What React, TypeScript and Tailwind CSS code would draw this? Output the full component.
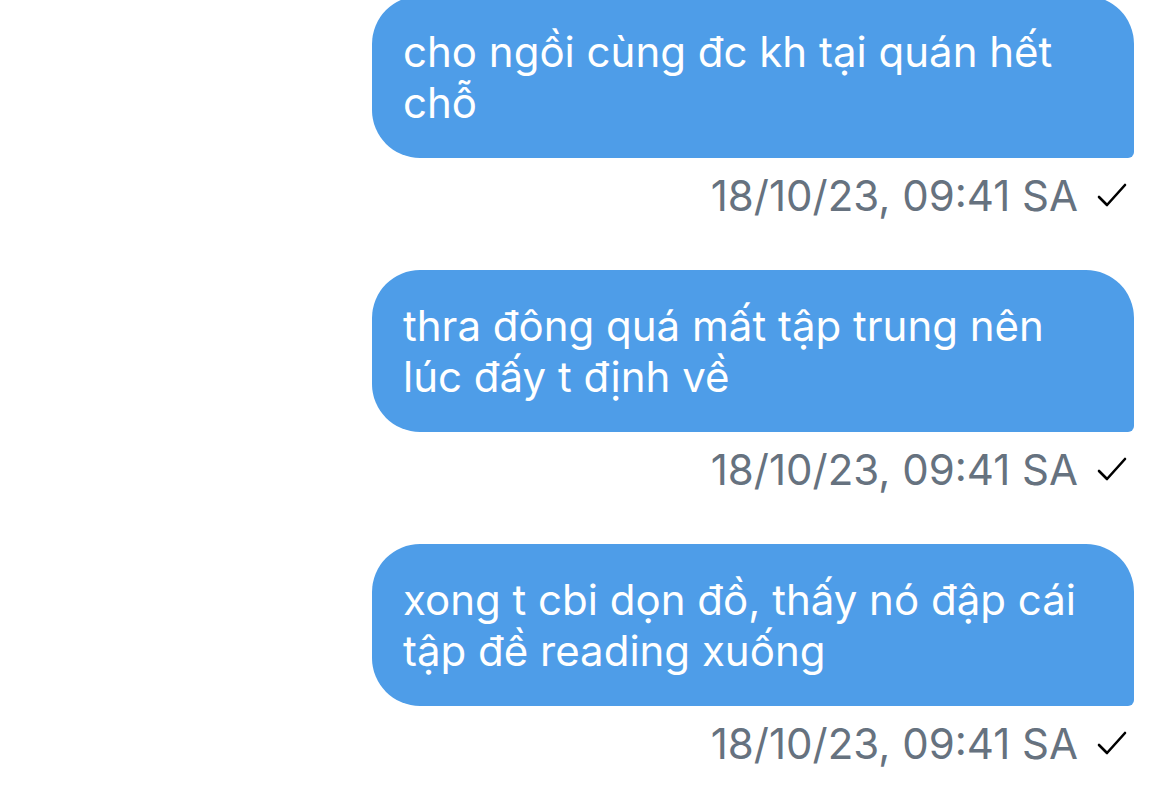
const messages = [
  "cho ngồi cùng đc kh tại quán hết chỗ",
  "thra đông quá mất tập trung nên lúc đấy t định về",
  "xong t cbi dọn đồ, thấy nó đập cái tập đề reading xuống",
];

function Check() {
  return (
    <svg width="32" height="30" viewBox="0 0 32 30" fill="none" className="ml-[18px]">
      <path d="M3 17 L11 25 L29 5" stroke="#000" strokeWidth="2.6" strokeLinecap="round" strokeLinejoin="round" />
    </svg>
  );
}

export default function App() {
  return (
    <main className="w-[1170px] h-[806px] overflow-hidden bg-white font-['Inter','Noto_Sans',sans-serif]">
      <div className="flex flex-col items-end pr-[36px] mt-[-4px]">
        {messages.map((m, i) => (
          <div key={i} className="flex flex-col items-end">
            <div className="w-[762px] bg-[#4e9de8] text-white text-[42px] leading-[51px] pl-[31px] pr-[48px] pt-[30px] pb-[30px] rounded-[48px] rounded-br-[6px]">
              {m}
            </div>
            <div className="flex items-center h-[74px] mb-[38px] pr-[6px]">
              <span className="text-[42px] text-[#66727f]">18/10/23, 09:41 SA</span>
              <Check />
            </div>
          </div>
        ))}
      </div>
    </main>
  );
}
